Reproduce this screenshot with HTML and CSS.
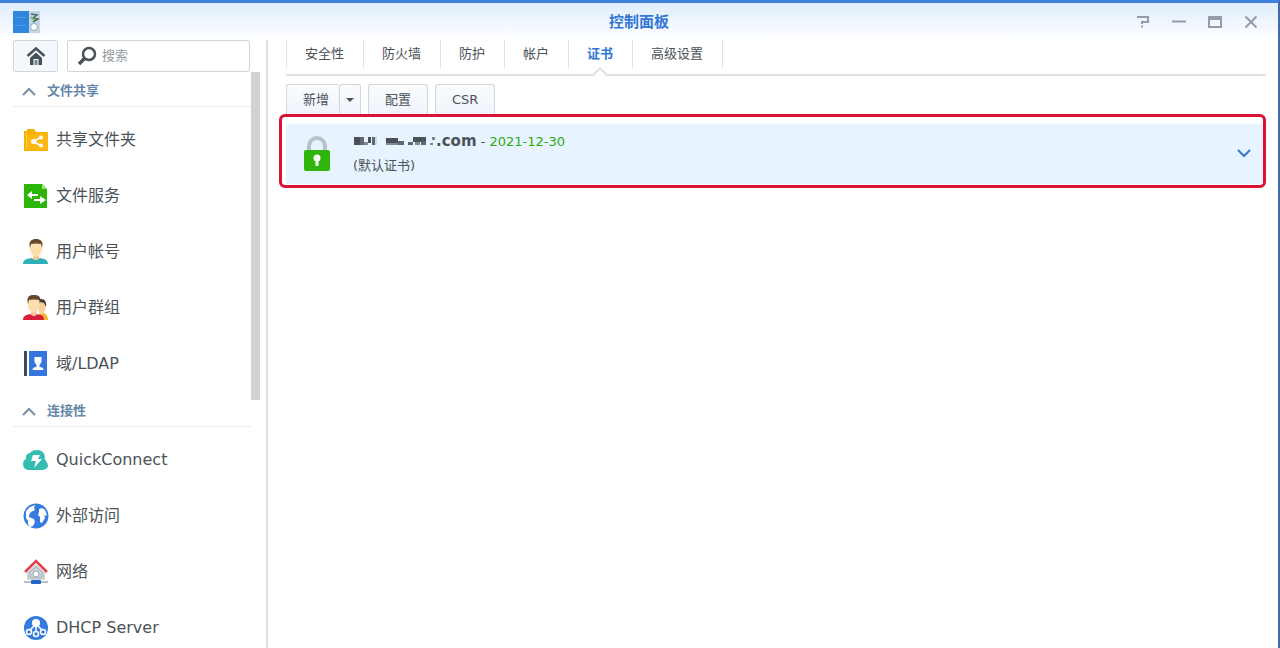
FILE: index.html
```
<!DOCTYPE html>
<html lang="zh-CN">
<head>
<meta charset="utf-8">
<title>控制面板</title>
<link rel="stylesheet" href="styles.css">
</head>
<body>
<div class="window">
  <header class="titlebar">
    <svg class="app-icon" width="27" height="22" viewBox="0 0 27 22">
      <rect width="16" height="22" fill="#2f86dc"/>
      <path d="M2 6.500h11M2 14.500h11" stroke="#4b9ae6"/>
      <rect x="16" width="11" height="22" fill="#c3d4e3"/>
      <path d="M18 3l6 1-4 3 5 1-5 3" fill="none" stroke="#4d6f6c" stroke-width="1.500"/>
      <path d="M18 6l3 3" stroke="#70c455" stroke-width="2"/>
      <circle cx="21" cy="16" r="3.500" fill="#fff" stroke="#91a9b9"/>
    </svg>
    <h1 class="title">控制面板</h1>
    <div class="window-tools">
      <button class="tool" type="button" aria-label="帮助"><svg width="14" height="14" viewBox="0 0 14 14"><path d="M1 2h11v5H6v2M6 10.500v2"/></svg></button>
      <button class="tool" type="button" aria-label="最小化"><svg width="14" height="14" viewBox="0 0 14 14"><path d="M0 6.500h14"/></svg></button>
      <button class="tool" type="button" aria-label="最大化"><svg width="14" height="14" viewBox="0 0 14 14"><path d="M1 2h12v10H1zM1 4h12"/></svg></button>
      <button class="tool" type="button" aria-label="关闭"><svg width="14" height="14" viewBox="0 0 14 14"><path d="M1.500 1.500l11 11M12.500 1.500l-11 11"/></svg></button>
    </div>
  </header>
  <div class="body">
    <aside class="sidebar">
      <div class="search-row">
        <button class="home" type="button" aria-label="主页">
          <svg width="20" height="20" viewBox="0 0 20 20"><path d="M1.500 10L10 2.500l8.500 7.500" fill="none" stroke="#48525a" stroke-width="2.500"/><path d="M10 6.500l6 5.500v7H4v-7z" fill="#48525a"/><path d="M7.500 19v-6h5v6z" fill="#f4f8fc"/><path d="M8.500 19v-5h3v5z" fill="#7c858d"/></svg>
        </button>
        <label class="search">
          <svg width="20" height="20" viewBox="0 0 20 20"><circle cx="12" cy="8" r="6" fill="none" stroke="#48525a" stroke-width="2.500"/><path d="M7.500 12.500L2 18" stroke="#48525a" stroke-width="3.500"/></svg>
          <input type="search" placeholder="搜索" aria-label="搜索">
        </label>
      </div>
      <div class="scroll-area">
        <nav class="nav">
          <section>
            <button class="group" type="button"><svg width="14" height="9" viewBox="0 0 14 9"><path d="M1 8l6-6 6 6"/></svg>文件共享</button>
            <ul class="items">
              <li><a class="item" href="#share"><svg width="26" height="26" viewBox="0 0 26 26"><path d="M1 4h3V2h7l2 3h12v19H1z" fill="#f8b000"/><path d="M3.500 6v16" stroke="#ffd35a"/><path d="M4.500 8H12l2-2h11v17H4.500z" fill="#fcb80e"/><path d="M18 10.500l-8 4 8 4" fill="none" stroke="#fff" stroke-width="1.800"/><circle cx="10.500" cy="14.500" r="2.500" fill="#fff"/><circle cx="18" cy="10.500" r="2" fill="#fff"/><circle cx="18" cy="18.500" r="2" fill="#fff"/></svg>共享文件夹</a></li>
              <li><a class="item" href="#files"><svg width="26" height="26" viewBox="0 0 26 26"><path d="M1 1h18l5 5v19H1z" fill="#2cb60a"/><path d="M19 1v5h5z" fill="#9ae37e"/><path d="M9 8l-5 4 5 4v-3h6v-2H9zM17 13v3h-6v2h6v3l6-4z" fill="#fff"/></svg>文件服务</a></li>
              <li><a class="item" href="#user"><svg width="26" height="26" viewBox="0 0 26 26"><path d="M0 25c0-4 3-5 8-6l5 2 4-2c5 1 8 2 8 6z" fill="#2fb0b8"/><path d="M10 14h6v5.500q-3 3-6 0z" fill="#efc894"/><path d="M7 6q6-5 12 0v5q-1 6-6 7-5-1-6-7z" fill="#fddfad"/><path d="M7 9C5 2 9 0 13 0s8 2 6 9l-1-4q-5-1-10 0z" fill="#68482c"/></svg>用户帐号</a></li>
              <li><a class="item" href="#group"><svg width="26" height="26" viewBox="0 0 26 26"><path d="M16 19l5-1q4 2 4 7h-8z" fill="#f6b52e"/><path d="M16 8q6-3 7 3-1 6-4 8l-3-1z" fill="#f8d199"/><path d="M17 4q7-1 6 8l-2-4-4-1z" fill="#423b38"/><path d="M0 25c0-4 3-5 7-6l4 2 3-2c5 1 7 2 7 6z" fill="#d71f3b"/><path d="M8 14h6v5.500q-3 3-6 0z" fill="#efc894"/><path d="M5 6q6-5 12 0v5q-1 6-6 7-5-1-6-7z" fill="#fddfad"/><path d="M5 9C3 1 7 0 11 0s8 1 6 9l-1-4q-5-1-10 0z" fill="#68482c"/></svg>用户群组</a></li>
              <li><a class="item" href="#ldap"><svg width="26" height="26" viewBox="0 0 26 26"><path d="M1 0h3v25H1z" fill="#3d4b59"/><path d="M6 0h18v25H6z" fill="#3478df"/><path d="M11.500 6h7v5l-2 3v2q4 0 4 3h-11q0-3 4-3v-2l-2-3z" fill="#fff"/></svg>域/LDAP</a></li>
            </ul>
          </section>
          <section>
            <button class="group" type="button"><svg width="14" height="9" viewBox="0 0 14 9"><path d="M1 8l6-6 6 6"/></svg>连接性</button>
            <ul class="items">
              <li><a class="item" href="#quickconnect"><svg width="26" height="26" viewBox="0 0 26 26"><path d="M5 23q-5-1-5-6 0-4 3-5-1-5 4-6 2-3 7-3 7 0 8 7-1 2 1 4 5 7-3 9z" fill="#35bdb2"/><path d="M10 8h7l-2 4h4l-8 9 2-7H8z" fill="#fff"/></svg>QuickConnect</a></li>
              <li><a class="item" href="#external"><svg width="26" height="26" viewBox="0 0 26 26"><circle cx="13" cy="13" r="12.500" fill="#367be0"/><path d="M3 8l4-4 5-2-1 3 1 2-4 2-2 3v2l5 2 1 3-2 4-3 1-2-3v-3l-2-3z" fill="#fff"/><path d="M16 6l3-1 3 2 2 5-2 1-1-1 1 3-3 5-2-1v-5l-2-2 1-3z" fill="#fff"/></svg>外部访问</a></li>
              <li><a class="item" href="#network"><svg width="26" height="26" viewBox="0 0 26 26"><path d="M13 5l9 8v8H4v-8z" fill="#ced4da"/><path d="M13 8l6 5v6H7v-6z" fill="none" stroke="#aab1bb"/><circle cx="13" cy="15" r="3" fill="#fff" stroke="#9ba4b0"/><path d="M2 13L13 2l11 11" fill="none" stroke="#e63e4e" stroke-width="2.500"/><path d="M1 23h24" stroke="#b8c0c8" stroke-width="2"/><rect x="8" y="21" width="10" height="4" rx="1" fill="#2267c5"/></svg>网络</a></li>
              <li><a class="item" href="#dhcp"><svg width="26" height="26" viewBox="0 0 26 26"><circle cx="13" cy="13" r="12" fill="#347bdb"/><path d="M13 10v7M12 10l-6 6M14 10l6 6" stroke="#fff" stroke-width="1.500"/><circle cx="13" cy="8" r="4" fill="#fff"/><g fill="#347bdb" stroke="#fff" stroke-width="1.500"><circle cx="6" cy="17" r="2.500"/><circle cx="13" cy="19" r="2.500"/><circle cx="20" cy="17" r="2.500"/></g></svg>DHCP Server</a></li>
            </ul>
          </section>
        </nav>
        <div class="scrollbar"></div>
      </div>
    </aside>
    <main class="main">
      <nav class="tabs">
        <a class="tab" href="#security">安全性</a>
        <a class="tab" href="#firewall">防火墙</a>
        <a class="tab" href="#protection">防护</a>
        <a class="tab" href="#account">帐户</a>
        <a class="tab active" href="#certificate" aria-current="page">证书<svg class="notch" width="18" height="10" viewBox="0 0 18 10"><path d="M0 7h2l7-6 7 6h2v3H0z" fill="#fff"/><path d="M0 8h2l7-6.500L16 8h2" fill="none" stroke="#dfdfdf" stroke-width="2"/></svg></a>
        <a class="tab" href="#advanced">高级设置</a>
      </nav>
      <div class="toolbar">
        <div class="split">
          <button class="btn" type="button">新增</button>
          <button class="btn more" type="button" aria-label="更多"><svg width="8" height="4" viewBox="0 0 8 4"><path d="M0 0h8L4 4z" fill="#48525a"/></svg></button>
        </div>
        <button class="btn" type="button">配置</button>
        <button class="btn" type="button">CSR</button>
      </div>
      <div class="highlight">
        <article class="cert">
          <svg class="lock" width="26" height="35" viewBox="0 0 26 35"><path d="M5 17V10a8 8 0 0 1 16 0v7" fill="none" stroke="#b9c0c7" stroke-width="4"/><rect y="14" width="26" height="21" rx="2" fill="#2fb50b"/><circle cx="13" cy="22" r="3.500" fill="#fff"/><path d="M11.500 23h3v7h-3z" fill="#fff"/></svg>
          <div class="cert-text">
            <p class="domain"><svg width="83" height="10" viewBox="0 0 83 10"><path d="M1 1h6v8H1zM15 1h3v6h-3zM33 2h12v5H33zM60 1h13v5H60z" fill="#4a5258"/><path d="M7 1h4v8H7zM19 1h3v8h-3zM45 5h6v4h-6zM55 6h5v3h-5zM68 5h5v4h-5z" fill="#606970"/><path d="M11 6h4v3h-4zM33 7h12v2H33zM62 6h5v3h-5z" fill="#7f8a92"/><path d="M22 1h2v8h-2z" fill="#cbd7e0"/><path d="M79 1h3v3h-3zM77 7h3v2h-3z" fill="#7e878e"/></svg><strong>.com</strong><span> - </span><time datetime="2021-12-30">2021-12-30</time></p>
            <p class="note">(默认证书)</p>
          </div>
          <button class="expand" type="button" aria-label="展开"><svg width="14" height="9" viewBox="0 0 14 9"><path d="M1 1l6 6 6-6" fill="none" stroke="#3479cd" stroke-width="2"/></svg></button>
        </article>
      </div>
    </main>
  </div>
</div>
</body>
</html>
```
FILE: styles.css
```
* {
  box-sizing: border-box;
}

body {
  margin: 0;
  font: 13px/20px "DejaVu Sans", "Noto Sans CJK SC", sans-serif;
  color: #4b5258;
}

button,
input {
  font: inherit;
  color: inherit;
}

button {
  padding: 0;
  border: 0;
  background: none;
}

a {
  color: inherit;
  text-decoration: none;
}

svg {
  flex: none;
}

p,
ul,
h1 {
  margin: 0;
  padding: 0;
}

.window {
  display: flex;
  flex-direction: column;
  height: 100vh;
  overflow: hidden;
  border-top: 3px solid #3e80dc;
  border-right: 2px solid #4169ad;
  background: linear-gradient(#dfedfc, #fff 38px);
}

.titlebar {
  display: grid;
  grid-template-columns: 1fr auto 1fr;
  align-items: center;
  height: 37px;
  padding: 0 13px;
  flex: none;
}

.title {
  font-size: 15px;
  line-height: 20px;
  color: #3277d5;
}

.window-tools {
  display: flex;
  justify-content: flex-end;
  gap: 22px;
  padding-right: 7px;
}

.tool {
  display: flex;
}

.tool svg {
  fill: none;
  stroke: #929da8;
  stroke-width: 2;
}

.body {
  display: flex;
  flex: 1;
  min-height: 0;
}

.sidebar {
  display: flex;
  flex-direction: column;
  width: 268px;
  flex: none;
  padding-left: 13px;
  border-right: 2px solid #dcdfe3;
}

.search-row {
  display: flex;
  gap: 9px;
  height: 32px;
  padding-right: 16px;
  flex: none;
}

.home {
  display: grid;
  place-items: center;
  width: 45px;
  border: 1px solid #d3d7dc;
  border-radius: 2px;
  background: #f5f8fd;
}

.search {
  display: flex;
  align-items: center;
  flex: 1;
  gap: 5px;
  min-width: 0;
  padding-left: 9px;
  border: 1px solid #d3d5d8;
  border-radius: 2px;
  background: #fff;
}

.search input {
  width: 100%;
  min-width: 0;
  padding: 0;
  border: 0;
  outline: 0;
  background: none;
}

.search input::placeholder {
  color: #959ca2;
}

.scroll-area {
  display: flex;
  flex: 1;
  min-height: 0;
  padding-right: 6px;
}

.nav {
  flex: 1;
  overflow: hidden;
}

.scrollbar {
  width: 9px;
  height: 57%;
  background: #d2d2d2;
}

.group {
  display: flex;
  align-items: center;
  gap: 11px;
  width: 100%;
  height: 35px;
  padding: 4px 0 0 9px;
  border-bottom: 1px solid #ececec;
  color: #6486a8;
  font-weight: bold;
}

.group svg {
  fill: none;
  stroke: #7890a8;
  stroke-width: 2;
}

.items {
  padding-top: 5px;
  list-style: none;
}

.item {
  display: flex;
  align-items: center;
  gap: 7px;
  height: 56px;
  padding-left: 10px;
  font-size: 16px;
}

.main {
  flex: 1;
  min-width: 0;
  padding: 0 12px 0 11px;
}

.tabs {
  display: flex;
  height: 36px;
  margin-left: 7px;
  border-bottom: 2px solid #e1e2e3;
}

.tab {
  height: 28px;
  padding: 4px 19px 0 18px;
  border-left: 1px solid #e1e3e5;
}

.tab:last-child {
  border-right: 1px solid #e1e3e5;
}

.active {
  position: relative;
  color: #3277d5;
  font-weight: bold;
}

.notch {
  position: absolute;
  left: 22px;
  top: 27px;
}

.toolbar {
  display: flex;
  gap: 7px;
  padding: 8px 0 0 7px;
}

.split {
  display: flex;
}

.btn {
  height: 30px;
  padding: 0 16px;
  border: 1px solid #d2d6db;
  border-bottom: 0;
  border-radius: 3px 3px 0 0;
  background: linear-gradient(#f9fbfd, #f0f5fc);
}

.split .btn {
  padding: 0 10px 0 16px;
  border-right: 0;
}

.split .more {
  width: 22px;
  padding: 0 6px;
  border-right: 1px solid #d2d6db;
}

.more svg {
  display: block;
}

.highlight {
  padding: 7px 0 1px 4px;
  border: 3px solid #d91236;
  border-radius: 6px;
  background: #fff;
}

.cert {
  display: flex;
  align-items: center;
  gap: 23px;
  height: 60px;
  padding: 0 12px 2px 18px;
  background: #e7f3fe;
}

.cert-text {
  flex: 1;
}

.domain,
.note {
  line-height: 24px;
}

.domain {
  white-space: pre;
}

.domain strong {
  font-size: 15px;
}

.domain time {
  color: #2cab12;
}

.expand {
  display: flex;
}
```
